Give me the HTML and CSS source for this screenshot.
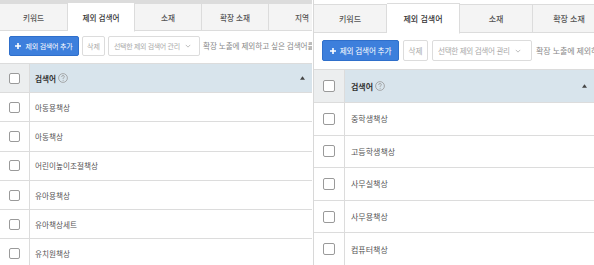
FILE: index.html
```html
<!DOCTYPE html>
<html lang="ko">
<head>
<meta charset="utf-8">
<link rel="stylesheet" href="styles.css">
</head>
<body>
<div class="screens">
  <section class="panel panel-a">
    <div class="tabs">
      <div class="tab">키워드</div>
      <div class="tab active">제외 검색어</div>
      <div class="tab">소재</div>
      <div class="tab">확장 소재</div>
      <div class="tab">지역</div>
    </div>
    <div class="toolbar">
      <button class="btn-primary"><svg class="plus" viewBox="0 0 6 6"><path d="M3 0v6M0 3h6" stroke="#fff" stroke-width="1.6"/></svg><span>제외 검색어 추가</span></button>
      <button class="btn">삭제</button>
      <div class="select"><span>선택한 제외 검색어 관리</span><svg class="chev" viewBox="0 0 8 5"><path d="M1 1l3 3 3-3" fill="none" stroke="#aaa" stroke-width="1"/></svg></div>
      <span class="hint">확장 노출에 제외하고 싶은 검색어를 등록하세요.</span>
    </div>
    <div class="table">
      <div class="row head">
        <div class="cb-cell"><span class="cb"></span></div>
        <div class="cell"><span>검색어</span><svg class="help" viewBox="0 0 10 10"><circle cx="5" cy="5" r="4.4" fill="none" stroke="#999" stroke-width="0.8"/><path d="M3.6 3.9c0-.9.6-1.4 1.4-1.4s1.4.5 1.4 1.2c0 .9-1.3 1-1.3 2v.3" fill="none" stroke="#999" stroke-width="0.8"/><circle cx="5.1" cy="7.3" r="0.5" fill="#999"/></svg><svg class="sort" viewBox="0 0 6 4"><path d="M0 4L3 0l3 4z" fill="#444"/></svg></div>
      </div>
      <div class="row"><div class="cb-cell"><span class="cb"></span></div><div class="cell">아동용책상</div></div>
      <div class="row"><div class="cb-cell"><span class="cb"></span></div><div class="cell">아동책상</div></div>
      <div class="row"><div class="cb-cell"><span class="cb"></span></div><div class="cell">어린이높이조절책상</div></div>
      <div class="row"><div class="cb-cell"><span class="cb"></span></div><div class="cell">유아용책상</div></div>
      <div class="row"><div class="cb-cell"><span class="cb"></span></div><div class="cell">유아책상세트</div></div>
      <div class="row"><div class="cb-cell"><span class="cb"></span></div><div class="cell">유치원책상</div></div>
    </div>
  </section>
  <section class="panel panel-b">
    <div class="tabs">
      <div class="tab">키워드</div>
      <div class="tab active">제외 검색어</div>
      <div class="tab">소재</div>
      <div class="tab">확장 소재</div>
    </div>
    <div class="toolbar">
      <button class="btn-primary"><svg class="plus" viewBox="0 0 6 6"><path d="M3 0v6M0 3h6" stroke="#fff" stroke-width="1.6"/></svg><span>제외 검색어 추가</span></button>
      <button class="btn">삭제</button>
      <div class="select"><span>선택한 제외 검색어 관리</span><svg class="chev" viewBox="0 0 8 5"><path d="M1 1l3 3 3-3" fill="none" stroke="#aaa" stroke-width="1"/></svg></div>
      <span class="hint">확장 노출에 제외하고 싶은 검색어를 등록하세요.</span>
    </div>
    <div class="table">
      <div class="row head">
        <div class="cb-cell"><span class="cb"></span></div>
        <div class="cell"><span>검색어</span><svg class="help" viewBox="0 0 10 10"><circle cx="5" cy="5" r="4.4" fill="none" stroke="#999" stroke-width="0.8"/><path d="M3.6 3.9c0-.9.6-1.4 1.4-1.4s1.4.5 1.4 1.2c0 .9-1.3 1-1.3 2v.3" fill="none" stroke="#999" stroke-width="0.8"/><circle cx="5.1" cy="7.3" r="0.5" fill="#999"/></svg><svg class="sort" viewBox="0 0 6 4"><path d="M0 4L3 0l3 4z" fill="#444"/></svg></div>
      </div>
      <div class="row"><div class="cb-cell"><span class="cb"></span></div><div class="cell">중학생책상</div></div>
      <div class="row"><div class="cb-cell"><span class="cb"></span></div><div class="cell">고등학생책상</div></div>
      <div class="row"><div class="cb-cell"><span class="cb"></span></div><div class="cell">사무실책상</div></div>
      <div class="row"><div class="cb-cell"><span class="cb"></span></div><div class="cell">사무용책상</div></div>
      <div class="row"><div class="cb-cell"><span class="cb"></span></div><div class="cell">컴퓨터책상</div></div>
    </div>
  </section>
</div>
</body>
</html>
```
FILE: styles.css
```css
* { box-sizing: border-box; }
html, body { margin: 0; padding: 0; background: #fff; }
body {
  font-family: "Noto Sans CJK KR", "Noto Sans", sans-serif;
  width: 594px;
  height: 265px;
  overflow: hidden;
}
.screens {
  display: flex;
  gap: 1px;
  height: 265px;
}
.panel {
  overflow: hidden;
  white-space: nowrap;
  font-size: var(--fs);
  color: #555;
}
.panel-a {
  width: 312px;
  flex: none;
  --fs: 7.6px;
  --sfs: 7px;
  --tabtop: 3px;
  --tabtopbg: #dcdcdc;
  --tabh: 28px;
  --tabw: 67px;
  --padx: 9px;
  --tooltop: 5px;
  --toolh: 32px;
  --btnh: 20px;
  --btnw: 70px;
  --delw: 23px;
  --selw: 92px;
  --gap: 3px;
  --headh: 29px;
  --rowh: 29.3px;
  --cbw: 30px;
  --cb: 11px;
}
.panel-b {
  flex: 1;
  border-left: 1px solid #d8d8d8;
  --fs: 8px;
  --sfs: 7.6px;
  --tabtop: 4px;
  --tabtopbg: #fff;
  --tabh: 28.5px;
  --tabw: 73px;
  --padx: 8px;
  --tooltop: 7.5px;
  --toolh: 36.5px;
  --btnh: 21px;
  --btnw: 77px;
  --delw: 25px;
  --selw: 100px;
  --gap: 4px;
  --headh: 33px;
  --rowh: 32.6px;
  --cbw: 31px;
  --cb: 12px;
}
.tabs {
  display: flex;
  padding-top: var(--tabtop);
  background: linear-gradient(var(--tabtopbg), var(--tabtopbg)) top / 100% var(--tabtop) no-repeat;
  height: calc(var(--tabtop) + var(--tabh));
}
.tab {
  flex: none;
  width: var(--tabw);
  height: var(--tabh);
  display: flex;
  align-items: center;
  justify-content: center;
  background: #f4f4f4;
  border-top: 1px solid #dcdcdc;
  border-right: 1px solid #dcdcdc;
  border-bottom: 1px solid #dcdcdc;
  color: #555;
  font-weight: 500;
}
.tab.active {
  background: #fff;
  border-bottom-color: #fff;
  color: #333;
  height: calc(var(--tabh) + 2px);
  margin-top: -1px;
}
.panel-a .tab:first-child { width: 68px; }
.toolbar {
  height: var(--toolh);
  display: flex;
  align-items: flex-start;
  gap: var(--gap);
  padding: var(--tooltop) var(--padx) 0;
}
.btn-primary, .btn, .select {
  font-family: inherit;
  height: var(--btnh);
  border-radius: 2px;
  padding: 0;
  display: flex;
  align-items: center;
  justify-content: center;
  flex: none;
  overflow: hidden;
}
.btn-primary {
  width: var(--btnw);
  background: #3d7fdc;
  border: 1px solid #2f6fcb;
  color: #fff;
  font-size: var(--sfs);
  letter-spacing: -0.2px;
}
.plus {
  width: 6px;
  height: 6px;
  margin-right: 4px;
  flex: none;
}
.btn {
  width: var(--delw);
  background: #fff;
  border: 1px solid #dcdcdc;
  color: #aaa;
  font-size: var(--sfs);
}
.select {
  width: var(--selw);
  background: #fff;
  border: 1px solid #dcdcdc;
  color: #aaa;
  justify-content: flex-start;
  padding-left: 5px;
  font-size: var(--sfs);
  letter-spacing: -0.35px;
}
.chev {
  width: 6px;
  height: 4px;
  margin-left: 5px;
  flex: none;
}
.hint {
  color: #888;
  line-height: var(--btnh);
  font-size: var(--fs);
  letter-spacing: -0.1px;
}
.table {
  border-top: 1px solid #dcdcdc;
}
.row {
  display: flex;
  height: var(--rowh);
  border-bottom: 1px solid #dcdcdc;
}
.row.head {
  height: var(--headh);
  background: #d8e4ec;
}
.cb-cell {
  width: var(--cbw);
  flex: none;
  border-right: 1px solid #dcdcdc;
  display: flex;
  align-items: center;
  justify-content: center;
}
.row.head .cb-cell { background: #eceeef; }
.cb {
  width: var(--cb);
  height: var(--cb);
  border: 1px solid #9a9a9a;
  border-radius: 2px;
  background: #fff;
}
.cell {
  flex: 1;
  display: flex;
  align-items: center;
  padding-left: 5px;
  color: #555;
}
.panel-b .cell { padding-left: 6px; }
.row.head .cell {
  color: #333;
  font-weight: 700;
  padding-right: 7px;
}
.help {
  width: 10px;
  height: 10px;
  margin-left: 2px;
  flex: none;
}
.sort {
  margin-left: auto;
  width: 5px;
  height: 4px;
  flex: none;
}
```
